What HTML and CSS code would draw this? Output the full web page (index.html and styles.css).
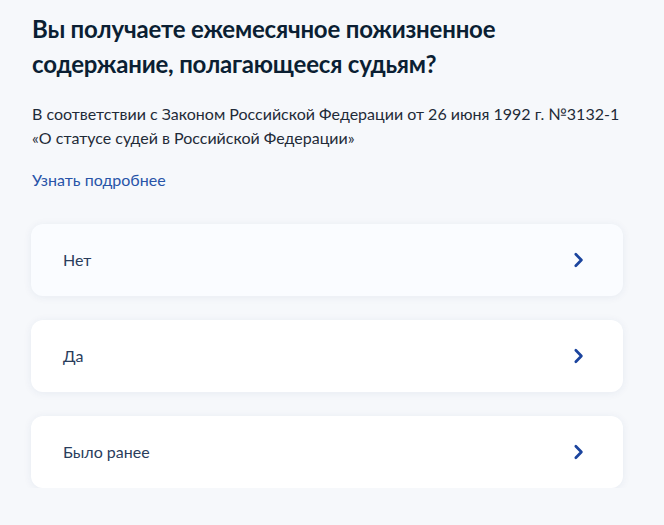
FILE: index.html
```html
<!DOCTYPE html>
<html lang="ru">
<head>
<meta charset="utf-8">
<title>Ежемесячное пожизненное содержание</title>
<link rel="stylesheet" href="styles.css">
</head>
<body>
<main class="question">
  <h1 class="question__title">Вы получаете ежемесячное пожизненное содержание, полагающееся судьям?</h1>
  <p class="question__hint">В соответствии с Законом Российской Федерации от 26 июня 1992 г. №3132-1 «О статусе судей в Российской Федерации»</p>
  <a class="question__more" href="#">Узнать подробнее</a>

  <ul class="answers">
    <li class="answer answer--hover">
      <span class="answer__label">Нет</span>
      <svg class="answer__chevron" viewBox="0 0 24 24" width="24" height="24" aria-hidden="true"><path d="M8.8 6.3l5.6 5.7-5.6 5.7"/></svg>
    </li>
    <li class="answer">
      <span class="answer__label">Да</span>
      <svg class="answer__chevron" viewBox="0 0 24 24" width="24" height="24" aria-hidden="true"><path d="M8.8 6.3l5.6 5.7-5.6 5.7"/></svg>
    </li>
    <li class="answer">
      <span class="answer__label">Было ранее</span>
      <svg class="answer__chevron" viewBox="0 0 24 24" width="24" height="24" aria-hidden="true"><path d="M8.8 6.3l5.6 5.7-5.6 5.7"/></svg>
    </li>
  </ul>
</main>
</body>
</html>
```

FILE: styles.css
```css
html, body {
  margin: 0;
  padding: 0;
}

body {
  background: #f6f8fb;
  font-family: Lato, "Noto Sans", sans-serif;
  color: #0b1f33;
}

.question {
  padding: 11px 41px 0 31px;
}

.question__title {
  margin: 0 0 0 1px;
  font-size: 24px;
  line-height: 35px;
  font-weight: 700;
  letter-spacing: -0.2px;
  color: #0b1f33;
  max-width: 500px;
}

.question__hint {
  margin: 21px 0 0 1px;
  font-size: 16px;
  line-height: 24px;
  color: #1f2b38;
}

.question__more {
  display: block;
  margin: 18px 0 0 1px;
  font-size: 16px;
  line-height: 24px;
  color: #2854a8;
  text-decoration: none;
}

.answers {
  list-style: none;
  margin: 32px 0 0;
  padding: 0;
  display: flex;
  flex-direction: column;
  gap: 24px;
}

.answer {
  height: 72px;
  display: flex;
  align-items: center;
  justify-content: space-between;
  padding: 0 32px;
  background: #ffffff;
  border-radius: 12px;
  box-shadow: 0 1px 8px rgba(30, 60, 110, 0.07);
}

.answer--hover {
  background: #fafcff;
}

.answer__label {
  font-size: 16px;
  line-height: 24px;
  color: #2a3d5c;
}

.answer__chevron {
  display: block;
  fill: none;
  stroke: #1b449e;
  stroke-width: 2.7;
  stroke-linecap: round;
  stroke-linejoin: round;
}
```
